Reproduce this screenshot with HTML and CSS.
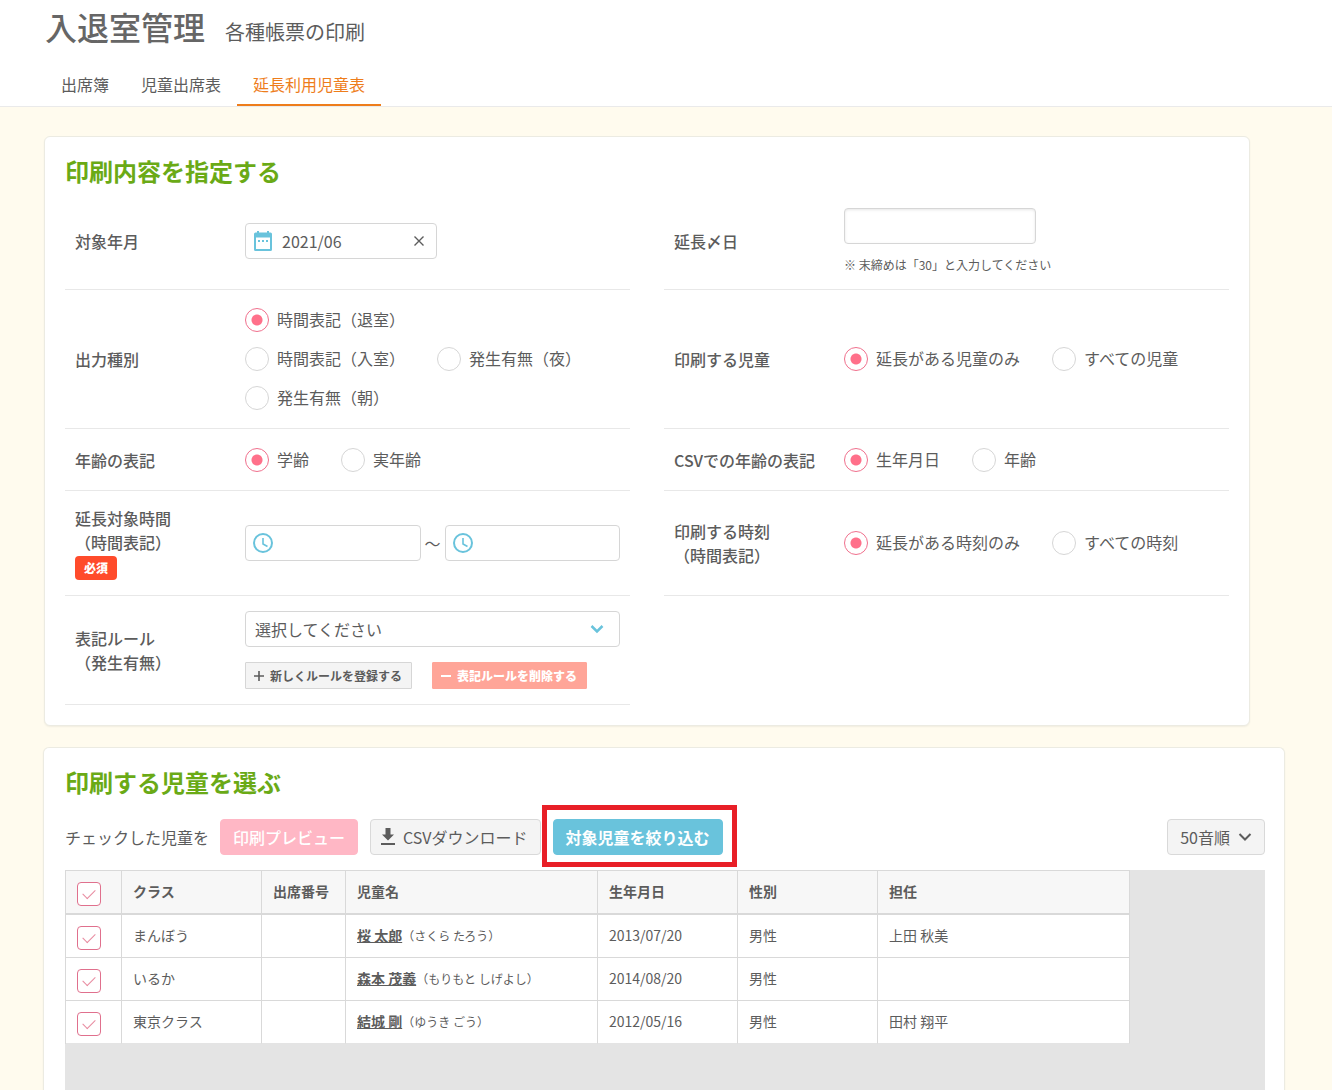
FILE: index.html
```html
<!DOCTYPE html>
<html lang="ja">
<head>
<meta charset="utf-8">
<meta name="viewport" content="width=device-width, initial-scale=1">
<title>入退室管理 各種帳票の印刷</title>
<link rel="stylesheet" href="styles.css">
</head>
<body>
<header class="page-header">
  <div class="page-title">
    <h1 class="page-title-main">入退室管理</h1>
    <p class="page-title-sub">各種帳票の印刷</p>
  </div>
  <nav class="tabs">
    <a class="tab" href="#">出席簿</a>
    <a class="tab" href="#">児童出席表</a>
    <a class="tab tab-active" href="#" aria-current="page">延長利用児童表</a>
  </nav>
</header>

<main class="content">
  <section class="card card-settings">
    <h2 class="card-title">印刷内容を指定する</h2>
    <form class="settings">
      <div class="field">
        <label class="field-label" for="month">対象年月</label>
        <div class="field-body">
          <div class="input-box input-short">
            <svg class="icon-calendar" width="18" height="20" viewBox="0 0 18 20" aria-hidden="true"><path fill="#69c3dc" fill-rule="evenodd" d="M3 0h2v1.500h8V0h2v1.500h1.500A1.500 1.500 0 0 1 18 3v15.500a1.500 1.500 0 0 1-1.500 1.500h-15A1.500 1.500 0 0 1 0 18.500V3a1.500 1.500 0 0 1 1.500-1.500H3zM2 6.500v11.500h14V6.500zM4 9h2v2H4zM8 9h2v2H8zM12 9h2v2h-2z"/></svg>
            <input class="input-inner" id="month" type="text" value="2021/06">
            <button class="clear" type="button" aria-label="クリア"><svg width="12" height="12" viewBox="0 0 12 12"><path d="M1.500 1.500l9 9M10.500 1.500l-9 9" stroke="#5c5c5c" stroke-width="1.400"/></svg></button>
          </div>
        </div>
      </div>

      <div class="field">
        <label class="field-label" for="closing">延長〆日</label>
        <div class="field-body">
          <input class="input-plain input-short" id="closing" type="text">
          <p class="note">※ 末締めは「30」と入力してください</p>
        </div>
      </div>

      <div class="field">
        <span class="field-label" id="l-type">出力種別</span>
        <div class="field-body options" role="radiogroup" aria-labelledby="l-type">
          <label class="option"><input class="radio" type="radio" name="type" checked><span class="option-text">時間表記（退室）</span></label>
          <label class="option"><input class="radio" type="radio" name="type"><span class="option-text">時間表記（入室）</span></label>
          <label class="option"><input class="radio" type="radio" name="type"><span class="option-text">発生有無（夜）</span></label>
          <label class="option"><input class="radio" type="radio" name="type"><span class="option-text">発生有無（朝）</span></label>
        </div>
      </div>

      <div class="field">
        <span class="field-label" id="l-child">印刷する児童</span>
        <div class="field-body options" role="radiogroup" aria-labelledby="l-child">
          <label class="option"><input class="radio" type="radio" name="child" checked><span class="option-text">延長がある児童のみ</span></label>
          <label class="option"><input class="radio" type="radio" name="child"><span class="option-text">すべての児童</span></label>
        </div>
      </div>

      <div class="field">
        <span class="field-label" id="l-age">年齢の表記</span>
        <div class="field-body options" role="radiogroup" aria-labelledby="l-age">
          <label class="option"><input class="radio" type="radio" name="age" checked><span class="option-text">学齢</span></label>
          <label class="option"><input class="radio" type="radio" name="age"><span class="option-text">実年齢</span></label>
        </div>
      </div>

      <div class="field">
        <span class="field-label" id="l-csv">CSVでの年齢の表記</span>
        <div class="field-body options" role="radiogroup" aria-labelledby="l-csv">
          <label class="option"><input class="radio" type="radio" name="csv" checked><span class="option-text">生年月日</span></label>
          <label class="option"><input class="radio" type="radio" name="csv"><span class="option-text">年齢</span></label>
        </div>
      </div>

      <div class="field">
        <label class="field-label" for="from">延長対象時間<br>（時間表記）<span class="badge">必須</span></label>
        <div class="field-body time-range">
          <div class="input-box">
            <svg width="20" height="20" viewBox="0 0 20 20" fill="none" stroke="#69c3dc" stroke-width="2" aria-hidden="true"><circle cx="10" cy="10" r="9"/><path d="M10 5v6l4.500 2.500" stroke-width="1.600"/></svg>
            <input class="input-inner" id="from" type="text" aria-label="開始時刻">
          </div>
          <span class="tilde">～</span>
          <div class="input-box">
            <svg width="20" height="20" viewBox="0 0 20 20" fill="none" stroke="#69c3dc" stroke-width="2" aria-hidden="true"><circle cx="10" cy="10" r="9"/><path d="M10 5v6l4.500 2.500" stroke-width="1.600"/></svg>
            <input class="input-inner" id="to" type="text" aria-label="終了時刻">
          </div>
        </div>
      </div>

      <div class="field">
        <span class="field-label" id="l-time">印刷する時刻<br>（時間表記）</span>
        <div class="field-body options" role="radiogroup" aria-labelledby="l-time">
          <label class="option"><input class="radio" type="radio" name="time" checked><span class="option-text">延長がある時刻のみ</span></label>
          <label class="option"><input class="radio" type="radio" name="time"><span class="option-text">すべての時刻</span></label>
        </div>
      </div>

      <div class="field">
        <label class="field-label" for="rule">表記ルール<br>（発生有無）</label>
        <div class="field-body">
          <div class="select-box">
            <select class="select" id="rule"><option>選択してください</option></select>
            <svg class="select-arrow" width="14" height="10" viewBox="0 0 14 10" aria-hidden="true"><path d="M1.500 2L7 7.500 12.500 2" fill="none" stroke="#69c3dc" stroke-width="2.500"/></svg>
          </div>
          <div class="rule-actions">
            <button class="mini-button" type="button"><svg width="10" height="10" viewBox="0 0 10 10" aria-hidden="true"><path d="M0 5h10M5 0v10" stroke="#5c5c5c" stroke-width="1.600"/></svg>新しくルールを登録する</button>
            <button class="mini-button mini-button-delete" type="button"><svg width="10" height="10" viewBox="0 0 10 10" aria-hidden="true"><path d="M0 5h10" stroke="#fff" stroke-width="2"/></svg>表記ルールを削除する</button>
          </div>
        </div>
      </div>
    </form>
  </section>

  <section class="card card-children">
    <h2 class="card-title">印刷する児童を選ぶ</h2>
    <div class="toolbar">
      <span class="toolbar-text">チェックした児童を</span>
      <button class="button button-preview" type="button">印刷プレビュー</button>
      <button class="button button-csv" type="button"><svg width="14" height="18" viewBox="0 0 14 18" aria-hidden="true"><path fill="#5c5c5c" d="M4.500 0h5v6.500H13L7 12.500l-6-6h3.500zM0 15h14v2H0z"/></svg>CSVダウンロード</button>
      <div class="highlighted">
        <button class="button button-filter" type="button">対象児童を絞り込む</button>
        <span class="highlight-frame"></span>
      </div>
      <button class="button button-sort" type="button">50音順<svg width="14" height="10" viewBox="0 0 14 10" aria-hidden="true"><path d="M1.500 2L7 7.500 12.500 2" fill="none" stroke="#5c5c5c" stroke-width="2"/></svg></button>
    </div>

    <div class="table-area">
      <table class="children">
        <colgroup><col class="col-check"><col class="col-class"><col class="col-number"><col class="col-name"><col class="col-birth"><col class="col-sex"><col class="col-teacher"></colgroup>
        <thead>
          <tr>
            <th class="cell-check"><input class="check" type="checkbox" checked aria-label="すべて選択"></th>
            <th>クラス</th><th>出席番号</th><th>児童名</th><th>生年月日</th><th>性別</th><th>担任</th>
          </tr>
        </thead>
        <tbody>
          <tr>
            <td class="cell-check"><input class="check" type="checkbox" checked aria-label="桜 太郎"></td>
            <td>まんぼう</td><td></td>
            <td><a class="name" href="#">桜 太郎</a><span class="kana">（さくら たろう）</span></td>
            <td>2013/07/20</td><td>男性</td><td>上田 秋美</td>
          </tr>
          <tr>
            <td class="cell-check"><input class="check" type="checkbox" checked aria-label="森本 茂義"></td>
            <td>いるか</td><td></td>
            <td><a class="name" href="#">森本 茂義</a><span class="kana">（もりもと しげよし）</span></td>
            <td>2014/08/20</td><td>男性</td><td></td>
          </tr>
          <tr>
            <td class="cell-check"><input class="check" type="checkbox" checked aria-label="結城 剛"></td>
            <td>東京クラス</td><td></td>
            <td><a class="name" href="#">結城 剛</a><span class="kana">（ゆうき ごう）</span></td>
            <td>2012/05/16</td><td>男性</td><td>田村 翔平</td>
          </tr>
        </tbody>
      </table>
    </div>
  </section>
</main>
</body>
</html>
```

FILE: styles.css
```css
* { box-sizing: border-box; }

body {
  margin: 0;
  min-height: 100vh;
  display: flex;
  flex-direction: column;
  background: #fffbee;
  color: #5c5c5c;
  font: 16px/24px "Noto Sans CJK JP", sans-serif;
}

button, input, select { font: inherit; color: inherit; margin: 0; }
h1, h2, p { margin: 0; }
svg { flex: none; }

/* Header */
.page-header {
  background: #fff;
  border-bottom: 1px solid #eaeaea;
  padding: 2px 45px 0;
}
.page-title { display: flex; align-items: baseline; gap: 20px; height: 62px; }
.page-title-main { font-size: 32px; line-height: 48px; font-weight: 500; color: #666; }
.page-title-sub { font-size: 20px; line-height: 30px; }
.tabs { display: flex; }
.tab {
  padding: 0 16px 2px;
  line-height: 40px;
  color: #5c5c5c;
  text-decoration: none;
}
.tab-active { color: #ee7d1b; box-shadow: inset 0 -2px #ee7d1b; }

/* Cards */
.content {
  flex: 1;
  display: flex;
  flex-direction: column;
  gap: 21px;
  padding: 29px 47px 0 43px;
}
.card {
  background: #fff;
  border: 1px solid #ecebe2;
  border-radius: 6px;
  padding: 20px;
  box-shadow: 0 1px 2px rgba(0, 0, 0, .06);
}
.card-settings { margin: 0 35px 0 1px; }
.card-title { font-size: 24px; line-height: 28px; font-weight: 700; color: #6aaa16; }

/* Settings form */
.settings {
  display: grid;
  grid-template-columns: 1fr 1fr;
  column-gap: 34px;
  margin-top: 8px;
}
.field {
  display: grid;
  grid-template-columns: 170px 1fr;
  align-items: center;
  min-height: 62px;
  padding: 15px 10px;
  border-bottom: 1px solid #e8e8e8;
}
.field-label { font-weight: 500; }
.field-body { min-width: 0; }
.badge {
  display: block;
  width: 42px;
  margin-top: 2px;
  border-radius: 4px;
  background: #ff4b2b;
  color: #fff;
  font-size: 12px;
  font-weight: 900;
  text-align: center;
}

.options { display: flex; flex-wrap: wrap; row-gap: 9px; }
.option {
  display: flex;
  align-items: center;
  gap: 8px;
  height: 30px;
  margin-right: 32px;
}
.option-text { padding-bottom: 2px; }
.radio {
  appearance: none;
  width: 24px;
  height: 24px;
  border: 1px solid #d6d6d6;
  border-radius: 50%;
  background: #fff;
}
.radio:checked {
  border-color: #f0708d;
  background: radial-gradient(circle, #ff708a 5px, #fff 6px);
}

.input-box {
  display: flex;
  align-items: center;
  gap: 10px;
  height: 36px;
  min-width: 0;
  padding: 0 8px;
  border: 1px solid #d6d6d6;
  border-radius: 4px;
  background: #fff;
}
.input-short { width: 192px; }
.input-inner {
  flex: 1;
  min-width: 0;
  padding: 0;
  border: 0;
  outline: 0;
  background: none;
}
.input-plain {
  display: block;
  height: 36px;
  border: 1px solid #d6d6d6;
  border-radius: 4px;
  box-shadow: inset 0 1px 3px rgba(0, 0, 0, .1);
}
.clear { display: flex; padding: 3px; border: 0; background: none; }
.note { margin-top: 12px; font-size: 12px; line-height: 18px; }

.time-range { display: flex; align-items: center; gap: 4px; }
.time-range .input-box { flex: 1; padding: 0 7px; }
.tilde { width: 16px; }

.select-box { display: grid; align-items: center; }
.select {
  grid-area: 1 / 1;
  appearance: none;
  width: 100%;
  height: 36px;
  padding: 0 9px;
  border: 1px solid #d6d6d6;
  border-radius: 4px;
  background: #fff;
}
.select-arrow { grid-area: 1 / 1; justify-self: end; margin-right: 16px; pointer-events: none; }
.rule-actions { display: flex; gap: 20px; margin-top: 15px; }
.mini-button {
  display: flex;
  align-items: center;
  gap: 6px;
  height: 27px;
  padding: 0 9px 0 8px;
  border: 1px solid #d6d6d6;
  border-radius: 1px;
  background: #f4f4f4;
  font-size: 12px;
  font-weight: 700;
}
.mini-button-delete { border-color: #ffa598; background: #ffa598; color: #fff; font-weight: 900; }

/* Child list */
.card-children {
  flex: 1;
  display: flex;
  flex-direction: column;
  padding: 20px 19px 0 21px;
  border-bottom: 0;
  border-radius: 6px 6px 0 0;
}
.toolbar { display: flex; align-items: center; gap: 12px; margin: 23px 0 15px; }
.toolbar-text { width: 143px; white-space: nowrap; }
.button {
  display: flex;
  align-items: center;
  gap: 8px;
  height: 36px;
  padding: 0 12px;
  border: 1px solid #d9d9d9;
  border-radius: 4px;
  background: #f4f4f4;
  white-space: nowrap;
}
.button-preview { border-color: #ffb7c5; background: #ffb7c5; color: #fff; font-weight: 500; }
.button-csv { padding-left: 10px; }
.button-filter { border-color: #69c3dc; background: #69c3dc; color: #fff; font-weight: 700; }
.button-sort { margin-left: auto; }
.highlighted { position: relative; }
.highlight-frame {
  position: absolute;
  inset: -14px -14px -12px -11px;
  border: 5px solid #e81f27;
  pointer-events: none;
}

.table-area { flex: 1; min-height: 220px; background: #e4e4e4; }
.children {
  width: 1065px;
  table-layout: fixed;
  border-collapse: separate;
  border-spacing: 0;
  border-left: 1px solid #d9d9d9;
  background: #fff;
  font-size: 14px;
  line-height: 20px;
}
.col-check { width: 56px; }
.col-class, .col-birth, .col-sex { width: 140px; }
.col-number { width: 84px; }
.col-name, .col-teacher { width: 252px; }
.children th, .children td {
  height: 43px;
  padding: 0 11px 2px;
  border-right: 1px solid #d9d9d9;
  border-bottom: 1px solid #d9d9d9;
  text-align: left;
  white-space: nowrap;
}
.children th {
  height: 45px;
  border-top: 1px solid #d9d9d9;
  border-bottom-width: 2px;
  background: #f7f7f7;
  font-weight: 700;
}
.children tbody tr:last-child td { border-bottom-color: #e4e4e4; }
.children .cell-check { padding-top: 4px; padding-bottom: 0; }
.check {
  appearance: none;
  display: grid;
  place-items: center;
  width: 24px;
  height: 24px;
  border: 1px solid #e0708d;
  border-radius: 4px;
  background: #fff;
}
.check:checked::before {
  content: "";
  width: 11px;
  height: 6px;
  margin-bottom: 3px;
  border: solid #e88ba0;
  border-width: 0 0 1px 1px;
  transform: rotate(-45deg);
}
.name { color: inherit; font-weight: 700; }
.kana { font-size: 12px; }
```
